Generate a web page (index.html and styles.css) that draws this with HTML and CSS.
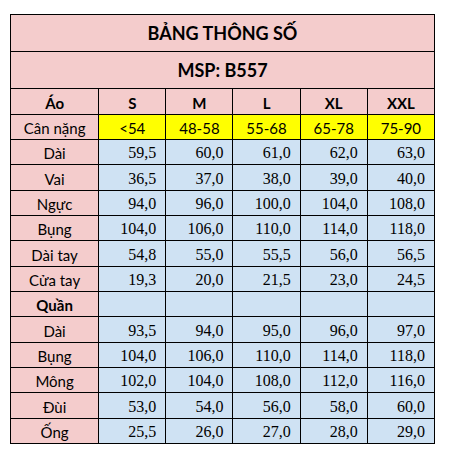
FILE: index.html
```html
<!DOCTYPE html>
<html lang="vi">
<head>
    <meta charset="UTF-8">
    <title>Bảng thông số B557</title>
    <link rel="stylesheet" href="styles.css">
</head>
<body>
<table class="size-table">
    <colgroup>
        <col class="col-label">
        <col class="col-size">
        <col class="col-size">
        <col class="col-size">
        <col class="col-size">
        <col class="col-size">
    </colgroup>
    <tr class="row-title">
        <th colspan="6">BẢNG THÔNG SỐ</th>
    </tr>
    <tr class="row-title">
        <th colspan="6">MSP: B557</th>
    </tr>
    <tr class="row-head r26">
        <th>Áo</th>
        <th>S</th>
        <th>M</th>
        <th>L</th>
        <th>XL</th>
        <th>XXL</th>
    </tr>
    <tr class="row-weight">
        <td class="label">Cân nặng</td>
        <td>&lt;54</td>
        <td>48-58</td>
        <td>55-68</td>
        <td>65-78</td>
        <td>75-90</td>
    </tr>
    <tr>
        <td class="label">Dài</td>
        <td>59,5</td><td>60,0</td><td>61,0</td><td>62,0</td><td>63,0</td>
    </tr>
    <tr class="r26">
        <td class="label">Vai</td>
        <td>36,5</td><td>37,0</td><td>38,0</td><td>39,0</td><td>40,0</td>
    </tr>
    <tr>
        <td class="label">Ngực</td>
        <td>94,0</td><td>96,0</td><td>100,0</td><td>104,0</td><td>108,0</td>
    </tr>
    <tr>
        <td class="label">Bụng</td>
        <td>104,0</td><td>106,0</td><td>110,0</td><td>114,0</td><td>118,0</td>
    </tr>
    <tr class="r26">
        <td class="label">Dài tay</td>
        <td>54,8</td><td>55,0</td><td>55,5</td><td>56,0</td><td>56,5</td>
    </tr>
    <tr>
        <td class="label">Cửa tay</td>
        <td>19,3</td><td>20,0</td><td>21,5</td><td>23,0</td><td>24,5</td>
    </tr>
    <tr>
        <td class="label group">Quần</td>
        <td></td><td></td><td></td><td></td><td></td>
    </tr>
    <tr class="r26">
        <td class="label">Dài</td>
        <td>93,5</td><td>94,0</td><td>95,0</td><td>96,0</td><td>97,0</td>
    </tr>
    <tr>
        <td class="label">Bụng</td>
        <td>104,0</td><td>106,0</td><td>110,0</td><td>114,0</td><td>118,0</td>
    </tr>
    <tr>
        <td class="label">Mông</td>
        <td>102,0</td><td>104,0</td><td>108,0</td><td>112,0</td><td>116,0</td>
    </tr>
    <tr class="r26">
        <td class="label">Đùi</td>
        <td>53,0</td><td>54,0</td><td>56,0</td><td>58,0</td><td>60,0</td>
    </tr>
    <tr>
        <td class="label">Ống</td>
        <td>25,5</td><td>26,0</td><td>27,0</td><td>28,0</td><td>29,0</td>
    </tr>
</table>
</body>
</html>
```

FILE: styles.css
```css
* {
    margin: 0;
    padding: 0;
}

body {
    background-color: #fff;
    padding: 14px 0 0 10px;
}

.size-table {
    width: 425px;
    table-layout: fixed;
    border-collapse: collapse;
    font-family: "Lato", "Liberation Sans", sans-serif;
    color: #000;
}

.col-label {
    width: 88px;
}

.col-size {
    width: 67px;
}

th, td {
    box-sizing: border-box;
    border: 1px solid #000;
    padding: 0;
    line-height: 18px;
    overflow: hidden;
    white-space: nowrap;
}

tr {
    height: 25px;
}

tr.r26 {
    height: 26px;
}

.row-title {
    height: 37px;
}

.row-title th {
    background-color: #f4cccc;
    font-size: 18px;
    font-weight: bold;
    text-align: center;
    line-height: 22px;
}

.row-head th {
    background-color: #f4cccc;
    font-size: 15px;
    font-weight: bold;
    text-align: center;
    padding-top: 2px;
}

td {
    background-color: #cfe2f3;
    font-family: "Liberation Serif", serif;
    font-size: 16px;
    text-align: right;
    padding-top: 2px;
    padding-right: 9px;
}

td.label {
    background-color: #f4cccc;
    font-family: "Lato", "Liberation Sans", sans-serif;
    font-size: 15px;
    text-align: center;
    padding-right: 0;
}

td.group {
    font-weight: bold;
}

.row-weight td {
    background-color: #ffff00;
    font-family: "Lato", "Liberation Sans", sans-serif;
    font-size: 15px;
    text-align: center;
    padding-right: 0;
}

.row-weight td.label {
    background-color: #f4cccc;
}
```
